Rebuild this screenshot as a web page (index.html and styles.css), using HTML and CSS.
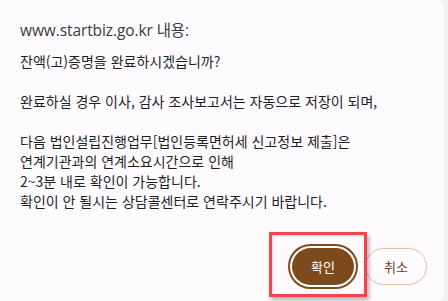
FILE: index.html
```html
<!DOCTYPE html>
<html lang="ko">
<head>
<meta charset="utf-8">
<link rel="stylesheet" href="styles.css">
</head>
<body>
<div class="dialog">
  <h1 class="title">www.startbiz.go.kr 내용:</h1>
  <div class="message">
    <p>잔액(고)증명을 완료하시겠습니까?</p>
    <p class="blank">&nbsp;</p>
    <p>완료하실 경우 이사, 감사 조사보고서는 자동으로 저장이 되며,</p>
    <p class="blank">&nbsp;</p>
    <p>다음 법인설립진행업무[법인등록면허세 신고정보 제출]은</p>
    <p>연계기관과의 연계소요시간으로 인해</p>
    <p>2~3분 내로 확인이 가능합니다.</p>
    <p>확인이 안 될시는 상담콜센터로 연락주시기 바랍니다.</p>
  </div>
  <div class="actions">
    <button class="btn btn-ok">확인</button>
    <button class="btn btn-cancel">취소</button>
    <div class="highlight"></div>
  </div>
</div>
</body>
</html>
```

FILE: styles.css
```css
html, body {
  margin: 0;
  padding: 0;
}
body {
  width: 448px;
  height: 301px;
  overflow: hidden;
  background: #f1f1f1;
  font-family: "Noto Sans CJK KR", "Noto Sans", sans-serif;
}
.dialog {
  box-sizing: border-box;
  width: 444px;
  height: 306px;
  margin-top: -3px;
  background: #fefbff;
  border-radius: 0 12px 12px 0;
  padding: 23px 20px 0 20px;
  position: relative;
}
.title {
  margin: 0;
  font-family: "Open Sans", "Noto Sans CJK KR", sans-serif;
  font-weight: 400;
  font-size: 15.5px;
  line-height: 20px;
  color: #3a3a3a;
  letter-spacing: -0.1px;
}
.message {
  margin-top: 11px;
  font-size: 14px;
  line-height: 20px;
  color: #1f1f1f;
}
.message p {
  margin: 0;
  white-space: nowrap;
}
.actions {
  position: relative;
  display: flex;
  justify-content: flex-end;
  gap: 11px;
  margin-top: 37px;
}
.btn {
  box-sizing: border-box;
  height: 37px;
  border-radius: 19px;
  font-family: "Noto Sans CJK KR", sans-serif;
  font-size: 13px;
  padding: 0;
  cursor: pointer;
}
.btn-ok {
  width: 62px;
  background: #7d4a1d;
  color: #ffffff;
  border: none;
  outline: 2px solid #7d4a1d;
  outline-offset: 2px;
  box-shadow: 0 0 0 2px #ffffff;
}
.btn-cancel {
  width: 62px;
  margin-right: -3px;
  background: transparent;
  color: #6b3f1e;
  border: 1px solid #e9b99d;
}
.highlight {
  position: absolute;
  left: 249px;
  top: -16px;
  width: 92px;
  height: 59px;
  border: 3px solid #f04848;
  box-shadow: 2px 3px 4px rgba(0, 0, 0, 0.3), inset 1px 1px 3px rgba(0, 0, 0, 0.15);
  pointer-events: none;
}
```
